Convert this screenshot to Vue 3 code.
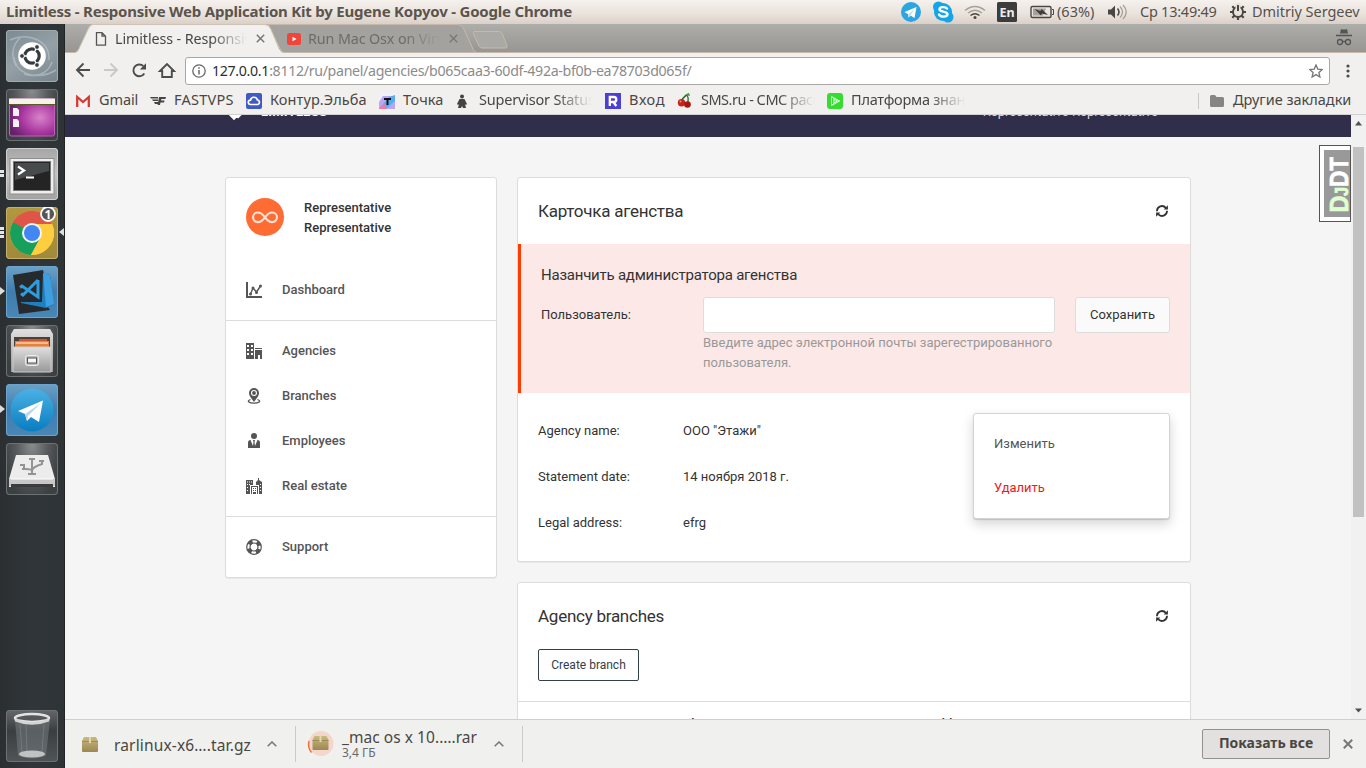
<script setup>
const bookmarks = [
  { icon: 'gmail', text: 'Gmail', slot: 75, w: 46, ls: -0.1 },
  { icon: 'vps', text: 'FASTVPS', slot: 96, w: 66, ls: 0.25 },
  { icon: 'cloud', text: 'Контур.Эльба', slot: 133, w: 104, ls: 0.1 },
  { icon: 'tochka', text: 'Точка', slot: 76, w: 48, ls: 0.1 },
  { icon: 'person', text: 'Supervisor Status', slot: 150, w: 113, ls: -0.2, fade: true },
  { icon: 'r', text: 'Вход', slot: 72, w: 42, ls: 0.6 },
  { icon: 'cherry', text: 'SMS.ru - СМС рассылка', slot: 150, w: 114, ls: -0.5, fade: true },
  { icon: 'play', text: 'Платформа знаний', slot: 150, w: 114, ls: -0.25, fade: true },
]
const groups = [
  [{ icon: 'chart', text: 'Dashboard' }],
  [
    { icon: 'office', text: 'Agencies' },
    { icon: 'pin', text: 'Branches' },
    { icon: 'tie', text: 'Employees' },
    { icon: 'city', text: 'Real estate' },
  ],
  [{ icon: 'life', text: 'Support' }],
]
const details = [
  ['Agency name:', 'ООО "Этажи"'],
  ['Statement date:', '14 ноября 2018 г.'],
  ['Legal address:', 'efrg'],
]
</script>

<template>
  <div class="desktop">
    <header class="topbar">
      <div class="win-title">Limitless - Responsive Web Application Kit by Eugene Kopyov - Google Chrome</div>
      <svg class="tray" width="132" height="24" viewBox="897 0 132 24">
        <circle cx="911" cy="12" r="10" fill="#2ca5e0" />
        <path d="M904.5 12l12-5-2 11-4-2.5-2 2-.3-3.3z" fill="#fff" /><path d="M908.2 14.2l6.5-5.4-4.2 6.7-2 2z" fill="#c5e0ee" />
        <g fill="#14a5e8"><circle cx="943" cy="12" r="9" /><circle cx="938.500" cy="7" r="5.500" /><circle cx="948" cy="17" r="5.500" /></g>
        <path d="M947 8.500c-1.500-2-7.500-2-7.500.8 0 3.200 8 1.500 8 5 0 3-6.800 3-8.500.3" fill="none" stroke="#fff" stroke-width="2.400" stroke-linecap="round" />
        <g fill="none" stroke="#a7a19b" stroke-width="1.500"><path d="M965 10.500q10-8 20 0M968 13q7-5.500 14 0" /><path d="M970.500 15.500q4.500-3.500 9 0" stroke="#4a4641" /></g>
        <circle cx="975" cy="17.500" r="1.500" fill="#4a4641" />
        <rect x="997" y="2" width="20" height="20" rx="1.500" fill="#3c3c3c" />
        <text x="1007" y="17" text-anchor="middle" class="en">En</text>
      </svg>
      <svg width="26" height="24" viewBox="1029 0 26 24">
        <rect x="1031" y="6.500" width="20" height="11" rx="1.500" fill="none" stroke="#4a4641" stroke-width="1.400" />
        <path d="M1052 9.500h1.500v5h-1.500" fill="none" stroke="#4a4641" /><path d="M1033 8.500h13l-3 7h-10z" fill="#a7a19b" />
        <path d="M1034.500 9l6 2 1-2 6.500 6-6-1.500-1 2z" fill="#3c3c3c" />
      </svg>
      <span class="tray-text battery">(63%)</span>
      <svg class="sound" width="24" height="24" viewBox="1105 0 24 24">
        <path d="M1108 9.500h3l4-4v13l-4-4h-3z" fill="#4a4641" /><path d="M1117.500 8.500q3 3.500 0 7" stroke="#4a4641" stroke-width="1.500" fill="none" />
        <path d="M1120 6.500q5 5.500 0 11M1123 5q6.500 7 0 14" stroke="#a7a19b" stroke-width="1.300" fill="none" />
      </svg>
      <span class="tray-text clock">Ср 13:49:49</span>
      <svg class="gear" width="18" height="24" viewBox="1229 0 18 24">
        <circle cx="1238" cy="12" r="5" fill="none" stroke="#4a4641" stroke-width="2" />
        <path d="M1230 12h3m10 0h3m-8 5v3M1232.300 6.300l2 2m7.400 7.400l2 2m0-11.400l-2 2m-7.400 7.400l-2 2" stroke="#4a4641" stroke-width="2.200" />
        <path d="M1238 3v9" stroke="#e8e1da" stroke-width="5" /><path d="M1238 5v6" stroke="#4a4641" stroke-width="2" />
      </svg>
      <span class="tray-text user">Dmitriy Sergeev</span>
    </header>

    <div class="below">
      <aside class="launcher">
        <div class="tile blue-gray">
          <svg viewBox="0 0 52 52"><g fill="none" stroke="#b9c3c9" opacity=".65" stroke-width="1.500"><path d="M4 10C22 2 44 10 43 30M8 27C10 46 34 50 50 40M14 8c-10 10-8 20-4 28M18 44c12 4 24 0 28-12" /></g>
            <circle cx="26" cy="26" r="13.800" fill="#fff" /><circle cx="26" cy="26" r="7.200" fill="none" stroke="#333b3f" stroke-width="3.200" />
            <path d="M26 26L14 26M26 26l6-10.400M26 26l6 10.400" stroke="#fff" stroke-width="1.400" />
            <g fill="#333b3f" stroke="#fff"><circle cx="16" cy="26" r="2.400" /><circle cx="31" cy="17" r="2.400" /><circle cx="31" cy="35" r="2.400" /></g></svg>
        </div>
        <div class="tile">
          <svg viewBox="0 0 52 52"><defs><radialGradient id="pur" cx=".68" cy=".5" r=".7"><stop offset="0" stop-color="#d883c9" /><stop offset=".6" stop-color="#a7359f" /><stop offset="1" stop-color="#65226b" /></radialGradient></defs>
            <rect x="3.500" y="10" width="45" height="37" rx="2" fill="url(#pur)" stroke="#c65cc0" /><path d="M3 9.500h46V15H3z" fill="#f4f3e5" /><path d="M3 15h46v1H3z" fill="#5c5a28" />
            <path d="M7 19h4l2 2v6H7zM7 30h4l2 2v6H7z" fill="#f7f0f7" /></svg>
        </div>
        <div class="tile light">
          <svg viewBox="0 0 52 52"><rect x="4" y="10.500" width="44" height="35.500" fill="#eee" stroke="#8d8d8d" /><rect x="7.500" y="13.500" width="37" height="29" fill="#242424" stroke="#777" /><path d="M9 15h34v8L9 32z" fill="#474b4b" />
            <path d="M12 18.500l6 4-6 4" fill="none" stroke="#fff" stroke-width="2.300" /><path d="M20 29.500h8" stroke="#fff" stroke-width="2" /></svg>
          <i class="dots dots-2"></i>
        </div>
        <div class="tile gold">
          <svg viewBox="0 0 52 52"><circle cx="26" cy="26" r="22" fill="#ffcd40" /><path d="M26 26L7 15A22 22 0 0 1 45 15L26 26z" fill="#df5548" /><path d="M26 17h20A22 22 0 0 0 7 15l10 16z" fill="#df5548" />
            <path d="M7 15A22 22 0 0 0 25 48l9-16-8-6z" fill="#16a05b" /><path d="M46 17H28l6 14-9 17A22 22 0 0 0 46 17z" fill="#ffcd40" /><circle cx="26" cy="26" r="10" fill="#f6f6f6" /><circle cx="26" cy="26" r="8" fill="#4286f4" />
            <circle cx="42" cy="7" r="7" fill="#555" stroke="#fff" stroke-width="1.800" /><text x="42" y="11.500" text-anchor="middle" class="count">1</text></svg>
          <i class="dots dots-3"></i><i class="arrow-right"></i>
        </div>
        <div class="tile blue">
          <svg viewBox="0 0 52 52"><path d="M7 9l30-5 1 4 6 1 2 28-4 4 2 3-31 4z" fill="#262a2d" /><path d="M37 7l7 2 4 30-8 3-25-5v-1h21z" fill="#1f7fc0" /><path d="M37 7l7 2 4 29-8 3z" fill="#3d9fe2" />
            <path d="M32 14v17L16 20l-2 1.500M32 14L17 29l-2-1.500" fill="none" stroke="#2d9de1" stroke-width="3" /></svg>
          <i class="arrow-left"></i>
        </div>
        <div class="tile">
          <svg viewBox="0 0 52 52"><defs><linearGradient id="cab" x2="0" y2="1"><stop offset="0" stop-color="#e0e0e0" /><stop offset="1" stop-color="#989898" /></linearGradient></defs><path d="M8 4h36l3 5v38H5V9z" fill="url(#cab)" /><rect x="8" y="12" width="36" height="10" fill="#4c4038" />
            <path d="M9 16h34v8H9z" fill="#e8813c" /><path d="M10 17.500h32v1H10z" fill="#fff4da" /><path d="M13 14h28v2H13z" fill="#c95731" /><path d="M7 22h38v25H7z" fill="url(#cab)" stroke="#ccc" />
            <rect x="19.500" y="30.500" width="13" height="10" rx="2" fill="#bbb" stroke="#eee" /><rect x="21.500" y="33" width="9" height="5" fill="#f7f7f7" stroke="#555" /></svg>
        </div>
        <div class="tile blue">
          <svg viewBox="0 0 52 52"><defs><linearGradient id="tg" x2="0" y2="1"><stop offset="0" stop-color="#4bb1e4" /><stop offset="1" stop-color="#087dc1" /></linearGradient></defs><circle cx="26" cy="26" r="21.500" fill="url(#tg)" />
            <path d="M12 27l25-10.500L33 38l-8-5-4 4-2-7z" fill="#fff" /><path d="M19 30l16-11-13 13-1 5z" fill="#bfd6e4" /></svg>
          <i class="arrow-left"></i>
        </div>
        <div class="tile">
          <svg viewBox="0 0 52 52"><path d="M10 12h32l7 24v8H3v-8z" fill="#ececec" /><path d="M3 36h46v7H3z" fill="#c8c8c8" /><path d="M5 41h42v3H5z" fill="#3c3c3c" /><path d="M5 36h42" stroke="#fff" />
            <g fill="none" stroke="#939393" stroke-width="2"><path d="M26 16v15M22 31h8M16 26h3q7 0 7 2 0-4 10-7v-3" /><path d="M23 16h6M14 22h4v4M33 18h5" /></g></svg>
        </div>
        <div class="tile trash">
          <svg viewBox="0 0 52 52"><path d="M9 10l3 36q14 5 28 0l4-36z" fill="#707779" opacity=".6" /><path d="M14 14l2 28M20 15l1 28M38 14l-2 28" stroke="#929a9b" opacity=".4" /><ellipse cx="26" cy="44" rx="13" ry="3.500" fill="#bfc3c3" />
            <ellipse cx="26" cy="8" rx="17" ry="4" fill="#54585a" stroke="#e2e3e3" stroke-width="2.500" /><path d="M9 10q17 7 34 0" stroke="#d3d4d4" stroke-width="2.500" fill="none" /></svg>
        </div>
      </aside>

      <main class="browser">
        <div class="tabstrip">
          <svg class="tab-shapes" width="1301" height="29" viewBox="65 24 1301 29">
            <path d="M65 52.500H1366" stroke="#c6b9a9" />
            <path d="M268 24.500H458q4 0 6 5L473 49q1.500 3.500 4 3.500H282z" fill="#a3a29f" stroke="#c6b9a9" />
            <path d="M75 53q3-1 4-4l9-20q2-4.500 5-4.500H265q4 0 6 5l8 19q2 4.500 5 4.500z" fill="#f1f0ef" /><path d="M75 52.500q3-1 4-4l9-19q2-5 5-5H265q4 0 6 5l8 19q2 4 5 4" fill="none" stroke="#cfc3b4" />
            <path d="M474 31.500h25q2 0 3 2l5 12q.6 2.500-1.500 2.500H482q-2 0-3-2l-5.500-12q-.8-2.500 1-2.500z" fill="#aaa9a6" stroke="#c6b9a9" />
            <path d="M1340 33.500l1-4.500q3 1 6 0l1 4.500z" fill="#555" /><path d="M1336 35.500h16" stroke="#555" stroke-width="1.600" /><g fill="none" stroke="#555" stroke-width="1.300"><circle cx="1340" cy="42" r="2.500" /><circle cx="1348" cy="42" r="2.500" /><path d="M1342.500 41.500h3" /></g>
          </svg>
          <div class="tab first">
            <svg width="12" height="14" viewBox="0 0 12 14"><path d="M1.500.7h5.500l3.500 3.500v9h-9zM7 .7v3.500h3.500" fill="none" stroke="#555" stroke-width="1.300" /></svg>
            <span class="tab-text">Limitless - Responsive</span>
            <svg class="x" width="9" height="9" viewBox="0 0 9 9"><path d="M.8.8l7.400 7.400M8.200.8L.8 8.200" stroke="#777" stroke-width="1.500" /></svg>
          </div>
          <div class="tab second">
            <svg width="14" height="12" viewBox="0 0 14 12"><rect width="14" height="12" rx="2.500" fill="#ef453b" /><path d="M5.500 3.700l4 2.300-4 2.300z" fill="#fff" /></svg>
            <span class="tab-text">Run Mac Osx on Virtual</span>
            <svg class="x" width="9" height="9" viewBox="0 0 9 9"><path d="M.8.8l7.400 7.400M8.200.8L.8 8.200" stroke="#777" stroke-width="1.300" /></svg>
          </div>
        </div>
        <div class="toolbar">
          <svg width="120" height="34" viewBox="65 54 120 34" fill="none" stroke="#4c4c4c" stroke-width="1.900">
            <path d="M90 71H77.500M83.500 64.500L77 71l6.500 6.500" /><path d="M104 71h12.500M110.500 64.500L117 71l-6.500 6.500" stroke="#c9c9c8" />
            <path d="M144.300 74.500a5.900 5.900 0 1 1-1-7.500" /><path d="M146 64.300v6.200h-6.200z" fill="#4c4c4c" stroke="none" />
            <path d="M160 72l7-7 7 7h-2.200v6h-9.600v-6z" />
          </svg>
          <div class="urlbar">
            <svg width="14" height="14" viewBox="0 0 14 14"><circle cx="7" cy="7" r="6.200" fill="none" stroke="#666" stroke-width="1.300" /><path d="M7 6v4.500M7 3.300v1.500" stroke="#666" stroke-width="1.500" /></svg>
            <span class="url"><b>127.0.0.1</b>:8112/ru/panel/agencies/b065caa3-60df-492a-bf0b-ea78703d065f/</span>
            <svg class="star" width="14" height="14" viewBox="0 0 14 14"><path d="M7 .9l1.800 4.200 4.500.4-3.400 3 1 4.500L7 10.600 3.100 13l1-4.500-3.400-3 4.500-.4z" fill="none" stroke="#777" stroke-width="1.300" /></svg>
          </div>
          <svg class="kebab" width="4" height="14" viewBox="0 0 4 14" fill="#4c4c4c"><circle cx="2" cy="2" r="1.600" /><circle cx="2" cy="7" r="1.600" /><circle cx="2" cy="12" r="1.600" /></svg>
        </div>
        <div class="bookmarks">
          <div v-for="b in bookmarks" :key="b.text" class="bm" :style="{ width: b.slot + 'px' }">
            <svg width="16" height="16" viewBox="0 0 16 16">
              <template v-if="b.icon === 'gmail'"><path d="M1 3h14v11H1z" fill="#f4f4f4" /><path d="M2.200 14V4L8 9l5.800-5v10" fill="none" stroke="#d93a30" stroke-width="2.300" /></template>
              <template v-else-if="b.icon === 'vps'"><path d="M0 4h8v1.500H1zM2 6.500h6V8H3zM4 9h4v2H5zM9 4h7l-.6 2h-4l-.3 1.500h3.500L14 9.500h-3.500L10 12H7.600z" fill="#454545" /></template>
              <template v-else-if="b.icon === 'cloud'"><rect width="16" height="16" rx="2" fill="#4059c4" /><path d="M4.500 11.500a2.200 2.200 0 0 1 0-4.400 3.500 3.500 0 0 1 6.800-.3 2.400 2.400 0 0 1 .4 4.700z" fill="none" stroke="#fff" stroke-width="1.700" /></template>
              <template v-else-if="b.icon === 'tochka'"><path d="M0 0h16v16H0z" fill="#eef2ff" /><path d="M0 16V9L4 3h12v13z" fill="#b9a7f5" /><path d="M0 16l10-12 6-2v6l-9 8z" fill="#55aef2" /><path d="M0 16l5-6 3 6z" fill="#f2799f" /><path d="M5 5h7v2H9.500v5h-2V7H5z" fill="#111" /></template>
              <template v-else-if="b.icon === 'person'"><g fill="#444"><circle cx="7" cy="3.500" r="2" /><path d="M4.500 6h5l2.500 5-1 1-1-1 1 4H8l-1-2-1 2H3l1-4-1 1-1-1z" /></g></template>
              <template v-else-if="b.icon === 'r'"><path d="M0 0h16v16H0z" fill="#4b3fd4" /><path d="M4.800 13V4h4q2.500 0 2.500 2.500T8.800 9h-4M8.300 9l3 4" fill="none" stroke="#fff" stroke-width="2.300" /></template>
              <template v-else-if="b.icon === 'cherry'"><path d="M4 8Q8 2 12 1M11 9q1-4-1-7" fill="none" stroke="#2c6b23" stroke-width="1.300" /><path d="M8 2l4-2 1 3z" fill="#4aa13b" /><circle cx="4.500" cy="9.800" r="3.700" fill="#c3231c" /><circle cx="10.500" cy="11.500" r="3.300" fill="#a9160f" /><circle cx="3.500" cy="8.500" r="1" fill="#f2958e" /></template>
              <template v-else><rect width="16" height="16" rx="3" fill="#35dd31" /><path d="M4.500 3.500v9L12.500 8zM7 6v4l3-2zM4.500 3.500L7 6m-2.500 6.500L7 10m5.500-2H10" fill="none" stroke="#e2ffe0" /></template>
            </svg>
            <span :class="{ fade: b.fade }" :style="{ width: b.w + 'px', letterSpacing: b.ls + 'px' }">{{ b.text }}</span>
          </div>
          <div class="others">
            <svg width="14" height="12" viewBox="0 0 14 12"><path d="M0 1.500Q0 0 1.500 0H5l1.500 2h6Q14 2 14 3.500v7q0 1.500-1.500 1.500h-11Q0 12 0 10.500z" fill="#858585" /></svg>
            <span>Другие закладки</span>
          </div>
        </div>

        <div class="viewport">
          <div class="page">
            <nav class="nav"><div class="nav-in">
              <svg width="22" height="20" viewBox="0 0 22 20"><path d="M3.500 9.500l5.500 5.500 4-4M11.500 15l7-7" fill="none" stroke="#fff" stroke-width="4.500" /></svg>
              <span class="brand">LIMITLESS</span><span class="who">Representative Representative</span>
            </div></nav>
            <div class="content">
              <section class="card side">
                <div class="profile">
                  <svg width="38" height="38" viewBox="0 0 38 38"><circle cx="19" cy="19" r="19" fill="#ff6c33" /><path d="M19 19.300c3-4 5-4.800 7.200-4.800a4.800 4.800 0 0 1 0 9.600c-2.200 0-4.200-.8-7.200-4.800s-5-4.800-7.200-4.800a4.800 4.800 0 0 0 0 9.600c2.200 0 4.200-.8 7.200-4.800z" fill="none" stroke="#ffe2d6" stroke-width="2.100" /></svg>
                  <div>Representative<br />Representative</div>
                </div>
                <ul v-for="(g, i) in groups" :key="i" class="group">
                  <li v-for="m in g" :key="m.text">
                    <svg width="16" height="16" viewBox="0 0 16 16" fill="#555">
                      <template v-if="m.icon === 'chart'"><path d="M0 0h2v14h14v2H0z" /><path d="M4.500 12l2.500-6 3.500 4L14.500 4" fill="none" stroke="#555" stroke-width="1.400" /><circle cx="4.500" cy="12" r="1.500" /><circle cx="7" cy="6" r="1.500" /><circle cx="10.500" cy="10.500" r="1.500" /><circle cx="14.500" cy="4" r="1.500" /></template>
                      <path v-else-if="m.icon === 'office'" fill-rule="evenodd" d="M0 0h8v16H0zM1 2v2h2V2zm4 0v2h2V2zM1 6v2h2V6zm4 0v2h2V6zm-4 4v2h2v-2zm4 0v2h2v-2zM9 5h7v1H9zM9 7h7v9h-2v-4h-2v4H9z" />
                      <template v-else-if="m.icon === 'pin'"><path fill-rule="evenodd" d="M8 0a5 5 0 0 1 5 5c0 3-2.500 5.500-5 9-2.500-3.500-5-6-5-9a5 5 0 0 1 5-5zm0 2a3 3 0 1 0 0 6 3 3 0 0 0 0-6z" /><circle cx="8" cy="5" r="1.900" /><path d="M4.500 11.500c-4.500 1.500-1 3.700 3.500 3.700s8-2.200 3.500-3.700" fill="none" stroke="#555" stroke-width="1.300" /></template>
                      <template v-else-if="m.icon === 'tie'"><circle cx="8" cy="3" r="3" /><path d="M4.500 7L7 13l.5-4L7 7h2l-.5 2 .5 4 2.500-6q2.500 0 2.500 3v5H2v-5q0-3 2.500-3z" /></template>
                      <path v-else-if="m.icon === 'city'" fill-rule="evenodd" d="M0 2h7v5H4v9H0zM1 3.500v1h1v-1zm2 0v1h1v-1zm2 0v1h1v-1zM1 6v1h1V6zm2 0v1h1V6zM1 9v1h1V9zm0 3v1h1v-1zM12 0h1v2l3 2v12h-3V7h-3V4l2-2zM14 6v1h1V6zm0 3v1h1V9zm0 3v1h1v-1zM5 8h7v8H5zM6 9v7h5V9zM7 10h1v1H7zm2 0h1v1H9zM7 12h1v1H7zm2 0h1v1H9zM7 14h3v2H7z" />
                      <template v-else><circle cx="8" cy="8" r="7.300" fill="none" stroke="#555" stroke-width="1.200" /><circle cx="8" cy="8" r="4" fill="none" stroke="#555" stroke-width="1.200" /><circle cx="8" cy="8" r="5.700" fill="none" stroke="#555" stroke-width="4.200" stroke-dasharray="4.480 4.480" stroke-dashoffset="-2.240" /></template>
                    </svg>
                    <span>{{ m.text }}</span>
                  </li>
                </ul>
              </section>
              <div class="col">
                <section class="card info">
                  <div class="card-head"><h5>Карточка агенства</h5>
                    <svg width="12" height="12" viewBox="0 0 12 12"><path d="M1 6.200a5 5 0 0 1 8.800-3.400M11 5.800a5 5 0 0 1-8.800 3.400" fill="none" stroke="#333" stroke-width="1.800" /><path d="M11.900 .3v4.200H7.700zM.1 11.700V7.500h4.200z" fill="#333" /></svg></div>
                  <div class="alert">
                    <h6>Назанчить администратора агенства</h6>
                    <div class="form">
                      <label>Пользователь:</label>
                      <div class="field"><div class="input"></div><p>Введите адрес электронной почты зарегестрированного пользователя.</p></div>
                      <div class="btn">Сохранить</div>
                    </div>
                  </div>
                  <div class="card-body">
                    <dl><template v-for="d in details" :key="d[0]"><dt>{{ d[0] }}</dt><dd>{{ d[1] }}</dd></template></dl>
                    <div class="menu"><div>Изменить</div><div class="danger">Удалить</div></div>
                  </div>
                </section>
                <section class="card branches">
                  <div class="card-head"><h5>Agency branches</h5>
                    <svg width="12" height="12" viewBox="0 0 12 12"><path d="M1 6.200a5 5 0 0 1 8.800-3.400M11 5.800a5 5 0 0 1-8.800 3.400" fill="none" stroke="#333" stroke-width="1.800" /><path d="M11.900 .3v4.200H7.700zM.1 11.700V7.500h4.200z" fill="#333" /></svg></div>
                  <div class="create">Create branch</div>
                  <div class="thead"><span>Name</span><span>Phone</span><span>Address</span></div>
                </section>
              </div>
            </div>
            <div class="djdt"><svg width="27" height="67" viewBox="0 0 27 67"><rect width="27" height="67" fill="#999" /><g transform="translate(24 61.500) rotate(-90)" class="dj"><text x="-1" y="0" textLength="17" lengthAdjust="spacingAndGlyphs" class="mint">D</text><text x="15.500" y="0" class="mint small" textLength="9" lengthAdjust="spacingAndGlyphs">J</text><text x="24.500" y="0" textLength="30" lengthAdjust="spacingAndGlyphs" class="white">DT</text></g></svg></div>
          </div>
          <div class="scroll">
            <svg width="15" height="32" viewBox="0 0 15 32"><path d="M4 10.500h7L7.500 6z" fill="#505050" /></svg>
            <div class="thumb"></div>
            <svg class="down" width="15" height="17" viewBox="0 0 15 17"><path d="M4 6.500h7l-3.500 4z" fill="#505050" /></svg>
          </div>
        </div>

        <footer class="downloads">
          <div class="dl one">
            <svg width="16" height="15" viewBox="0 0 16 15"><defs><linearGradient id="box" x2="0" y2="1"><stop offset="0" stop-color="#c9b981" /><stop offset="1" stop-color="#9c8750" /></linearGradient></defs><path d="M2 0h12l2 4v10q0 1-1 1H1q-1 0-1-1V4z" fill="url(#box)" /><path d="M0 4.500h16" stroke="#a08c58" /><path d="M7 0h2v6H7z" fill="#e3d8a8" /></svg>
            <span class="fname">rarlinux-x6….tar.gz</span>
            <svg class="caret" width="10" height="6" viewBox="0 0 10 6"><path d="M.7 5.300L5 1l4.300 4.300" fill="none" stroke="#777" stroke-width="1.500" /></svg>
          </div>
          <div class="dl two">
            <svg width="28" height="28" viewBox="0 0 28 28"><circle cx="15" cy="13.500" r="12.500" fill="#f4d7cb" /><path d="M5.500 22.500A13 13 0 0 1 3 11" fill="none" stroke="#f27038" stroke-width="1.500" /><path d="M8.500 6h12l2 4v9q0 1-1 1h-14q-1 0-1-1v-9z" fill="url(#box)" /><path d="M6.500 10.500h16" stroke="#a08c58" /><path d="M13.500 6h2v6h-2z" fill="#e3d8a8" /></svg>
            <span class="stack"><span class="fname">_mac os x 10.….rar</span><small>3,4 ГБ</small></span>
            <svg class="caret" width="10" height="6" viewBox="0 0 10 6"><path d="M.7 5.300L5 1l4.300 4.300" fill="none" stroke="#777" stroke-width="1.500" /></svg>
          </div>
          <div class="show-all">Показать все</div>
          <svg class="close" width="10" height="10" viewBox="0 0 10 10"><path d="M.8.8l8.400 8.400M9.200.8L.8 9.200" stroke="#777" stroke-width="2" /></svg>
        </footer>
      </main>
    </div>
  </div>
</template>

<style>
body { overflow: hidden; }
</style>
<style scoped>
* { box-sizing: border-box; }
svg { display: block; flex: none; }
.desktop { width: 1366px; height: 768px; overflow: hidden; display: flex; flex-direction: column; font-family: "Noto Sans", sans-serif; font-size: 14px; color: #4a4743; white-space: nowrap; }
.topbar { height: 24px; flex: none; display: flex; align-items: center; background: linear-gradient(#f5f1ed, #e9e2dc 60%, #dad0c8); }
.win-title { width: 897px; flex: none; padding-left: 6px; font-weight: 700; font-size: 15px; letter-spacing: -0.21px; color: #5b544c; line-height: 22px; margin-top: -2px; }
.tray-text { line-height: 22px; margin-top: -2px; color: #57514b; font-size: 14.5px; }
.en { font: 700 12.5px "Noto Sans", sans-serif; fill: #eee; }
.battery { width: 50px; flex: none; padding-left: 2px; }
.clock { width: 100px; flex: none; padding-left: 11px; letter-spacing: -0.25px; }
.user { padding-left: 5px; letter-spacing: -0.05px; }
.below { flex: 1; display: flex; min-height: 0; }
.launcher { width: 65px; flex: none; background: linear-gradient(90deg, #2b2f32, #303639 50%, #2e3436); border-right: 1px solid #202426; padding: 6px 0 6px 6px; display: flex; flex-direction: column; gap: 7px; }
.tile { position: relative; width: 52px; height: 52px; flex: none; border-radius: 4px; background: radial-gradient(ellipse at 50% 0, #8b8d8e, #55595b 45%, #3b4042 80%); box-shadow: inset 0 0 0 1px #6d7173; }
.tile svg { width: 52px; height: 52px; }
.blue-gray { background: linear-gradient(150deg, #7b8b92, #95a0a6 50%, #76858c); box-shadow: inset 0 0 0 1px #a0abb0; }
.light { background: linear-gradient(#a5a5a5, #c3c3c3 50%, #a1a1a1); box-shadow: inset 0 0 0 1px #cfcfcf; }
.gold { background: linear-gradient(#b19840, #a0893b); box-shadow: inset 0 0 0 1px #c4b068; }
.blue { background: linear-gradient(#6ba1c7, #3f7dae 50%, #4887b6); box-shadow: inset 0 0 0 1px #6ea4cb; }
.trash { margin-top: auto; background: linear-gradient(#65666a, #3a3e40 40%, #505557); }
.dots { position: absolute; left: -6px; width: 4px; background: repeating-linear-gradient(#e5e5e5 0 3px, transparent 3px 4px); }
.dots-2 { top: 22px; height: 7px; }
.dots-3 { top: 20px; height: 11px; }
.arrow-left, .arrow-right { position: absolute; top: 21px; border: 5px solid transparent; }
.arrow-left { left: -6px; border-width: 4px 0 4px 5px; border-left-color: #ddd; }
.arrow-right { right: -6px; border-width: 4px 5px 4px 0; border-right-color: #ddd; }
.count { font: 700 12px "Noto Sans", sans-serif; fill: #fff; }
.browser { flex: 1; min-width: 0; display: flex; flex-direction: column; background: #f1f0ef; }
.tabstrip { height: 29px; flex: none; position: relative; display: flex; background: linear-gradient(#adadaa, #979591); }
.tab-shapes { position: absolute; left: 0; top: 0; }
.tab { position: relative; display: flex; align-items: center; height: 29px; }
.first { padding-left: 30px; width: 222px; }
.first .tab-text { margin-left: 8px; width: 132px; }
.second .tab-text { margin-left: 7px; width: 132px; color: #6d6b68; }
.second { color: #6d6b68; }
.tab .x { margin-left: 9px; }
.tab-text { font-size: 14.3px; letter-spacing: -0.1px; }
.tab-text, .fade { overflow: hidden; -webkit-mask-image: linear-gradient(90deg, #000 calc(100% - 36px), transparent); mask-image: linear-gradient(90deg, #000 calc(100% - 36px), transparent); }
.toolbar { height: 34px; flex: none; display: flex; align-items: center; }
.urlbar { width: 1145px; height: 28px; border: 1px solid #a9a8a6; border-radius: 3px; background: #fff; display: flex; align-items: center; padding: 0 6px; margin-top: 2px; }
.url { margin: -2px 0 0 6px; color: #8b8b8b; font-size: 14.2px; letter-spacing: -0.33px; }
.url b { font-weight: 400; color: #2e2e2e; }
.star { margin-left: auto; }
.kebab { margin: 2px 0 0 16px; }
.bookmarks { height: 28px; flex: none; border-bottom: 1px solid #d2d1d0; display: flex; align-items: center; padding-left: 10px; font-size: 14.5px; line-height: 20px; }
.bm { display: flex; align-items: center; gap: 8px; flex: none; height: 16px; }
.bm span, .others span { margin-top: -3px; }
.others { margin-left: auto; display: flex; align-items: center; height: 16px; border-left: 1px solid #c9c8c7; padding-left: 11px; width: 168px; gap: 9px; }
.viewport { flex: 1; min-height: 0; display: flex; }
.page { position: relative; width: 1286px; overflow: hidden; background: #f5f5f5; font: 13px/20px Roboto, sans-serif; color: #333; }
.nav { height: 22px; background: #302e4a; overflow: hidden; color: #fff; }
.nav-in { height: 20px; margin: -13px 0 0 160px; width: 966px; display: flex; align-items: center; }
.brand { margin-left: 14px; font-weight: 700; font-size: 13px; letter-spacing: .2px; }
.who { margin: 0 33px 0 auto; color: #d8d8de; font-size: 13px; }
.content { display: flex; gap: 20px; margin: 40px 0 0 160px; align-items: flex-start; }
.card { background: #fff; border: 1px solid #dcdcdc; border-radius: 3px; box-shadow: 0 1px 1px rgba(0, 0, 0, .05); }
.side { width: 272px; }
.profile { height: 81px; padding: 20px 20px 0; display: flex; gap: 20px; font-weight: 500; }
.group { list-style: none; margin: 0; padding: 7px 0 8px; border-top: 1px solid #ddd; }
.profile + .group { border-top-color: transparent; }
.group li { height: 45px; display: flex; align-items: center; gap: 20px; padding: 0 20px; font-weight: 500; color: #555; }
.col { width: 674px; }
.card-head { display: flex; justify-content: space-between; align-items: center; height: 66px; padding: 0 22px 0 20px; }
h5 { margin: 0; font-size: 17px; font-weight: 400; letter-spacing: -.015em; }
h6 { margin: 0; font-size: 15px; font-weight: 400; line-height: 23px; letter-spacing: -.015em; }
.info { height: 385px; }
.alert { height: 149px; background: #fce8e6; border-left: 3px solid #ff3d00; padding: 20px 20px 0; white-space: normal; }
.form { display: flex; margin-top: 10px; }
.form label { width: 162px; padding-top: 8px; }
.field { width: 352px; }
.input { height: 36px; background: #fff; border: 1px solid #ddd; border-radius: 3px; }
.field p { margin: 0; color: #999; }
.btn { margin-left: 20px; width: 95px; height: 36px; border: 1px solid #ddd; border-radius: 3px; background: #fafafa; line-height: 34px; text-align: center; }
.card-body { display: flex; justify-content: space-between; padding: 20px; }
dl { display: grid; grid-template-columns: 145px 200px; margin: 0; grid-auto-rows: 46px; padding-top: 8px; }
dd { margin: 0; }
.menu { width: 197px; height: 106px; border: 1px solid #d4d4d4; border-radius: 3px; background: #fff; box-shadow: 0 5px 12px rgba(0, 0, 0, .17), 0 1px 1px rgba(0, 0, 0, .14); padding: 8px 20px; color: #555; }
.menu div { height: 44px; line-height: 44px; }
.menu .danger { color: #f11a1a; }
.branches { margin-top: 20px; height: 300px; }
.create { margin-left: 20px; width: 101px; height: 32px; border: 1px solid #324148; border-radius: 2px; line-height: 30px; text-align: center; font-size: 12px; color: #324148; }
.thead { margin-top: 20px; border-top: 1px solid #ddd; display: flex; padding: 12px 20px; font-weight: 500; }
.thead span:nth-child(1) { width: 145px; }
.thead span:nth-child(2) { width: 246px; }
.djdt { position: absolute; right: 0; top: 30px; width: 32px; height: 77px; border: 1px solid #555; background: #fff; padding: 4px 0 0 4px; overflow: hidden; }
.dj { font-family: "Liberation Sans", sans-serif; font-weight: 700; font-size: 26px; stroke-width: .8px; }
.dj .small { font-size: 19px; }
.mint { fill: #dfffd0; stroke: #dfffd0; }
.white { fill: #fff; stroke: #fff; }
.scroll { width: 15px; background: #f1f1f1; display: flex; flex-direction: column; }
.thumb { width: 11px; height: 370px; margin-left: 2px; background: #c1c1c1; }
.down { margin-top: auto; }
.downloads { height: 49px; flex: none; border-top: 1px solid #d0cfcd; background: #f0f0ee; display: flex; align-items: center; }
.dl { height: 36px; display: flex; align-items: center; border-right: 1px solid #cbcac8; flex: none; }
.one { width: 231px; padding-left: 17px; }
.two { width: 227px; padding-left: 10px; }
.fname { font-size: 15.5px; line-height: 20px; width: 137px; display: block; letter-spacing: .15px; }
.one .fname { margin-left: 16px; padding-top: 1px; }
.one .caret { margin-left: 16px; }
.stack { margin-left: 8px; padding-top: 2px; }
.stack .fname { line-height: 16px; letter-spacing: .05px; }
.stack small { display: block; font-size: 12px; line-height: 16px; color: #6b6865; }
.two .caret { margin-left: 15px; }
.show-all { margin-left: auto; width: 128px; height: 30px; border: 1px solid #93928f; border-radius: 2px; background: #e2e1df; font-weight: 700; line-height: 26px; text-align: center; }
.close { margin: 0 13px; }
</style>
